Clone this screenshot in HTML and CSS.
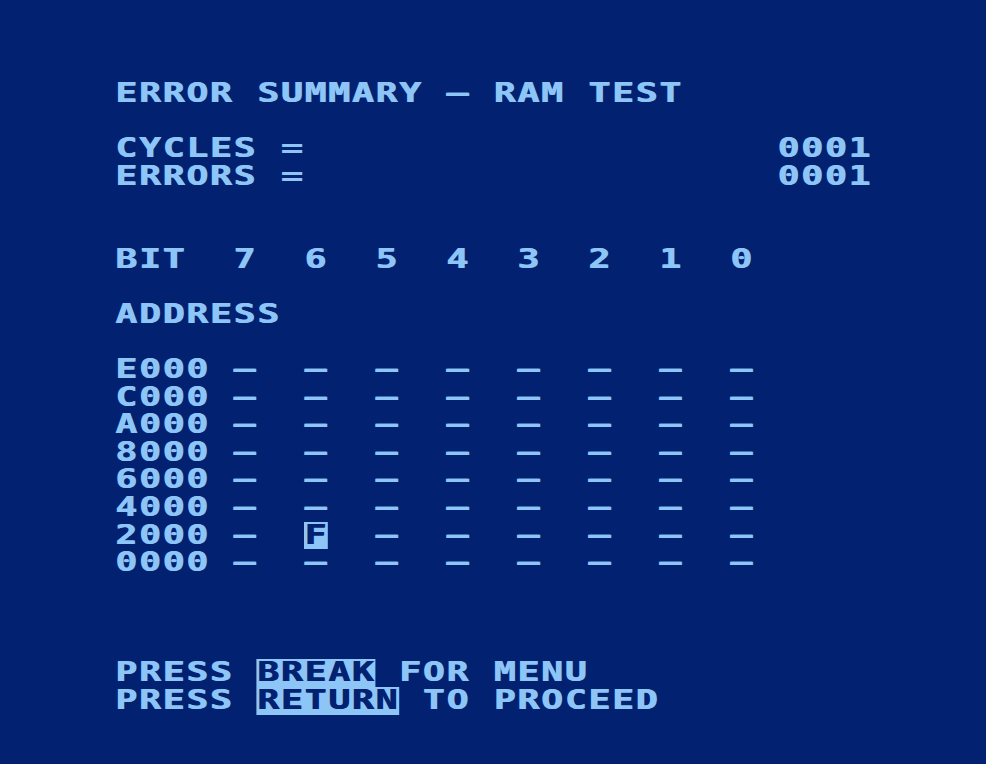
FILE: index.html
```html
<!DOCTYPE html>
<html lang="en">
  <head>
    <meta charset="UTF-8">
    <meta name="viewport" content="width=device-width, initial-scale=1.0">
    <title>Error Summary - RAM Test</title>
    <link rel="stylesheet" href="styles.css">
  </head>
  <body>
    <div class="screen">
      <div class="row">ERROR SUMMARY – RAM TEST</div>
      <div class="row"></div>
      <div class="row">CYCLES =                    0001</div>
      <div class="row">ERRORS =                    0001</div>
      <div class="row"></div>
      <div class="row"></div>
      <div class="row">BIT  7  6  5  4  3  2  1  0</div>
      <div class="row"></div>
      <div class="row">ADDRESS</div>
      <div class="row"></div>
      <!-- one row per 8K bank, one column per data bit -->
      <div class="row">E000 –  –  –  –  –  –  –  –</div>
      <div class="row">C000 –  –  –  –  –  –  –  –</div>
      <div class="row">A000 –  –  –  –  –  –  –  –</div>
      <div class="row">8000 –  –  –  –  –  –  –  –</div>
      <div class="row">6000 –  –  –  –  –  –  –  –</div>
      <div class="row">4000 –  –  –  –  –  –  –  –</div>
      <div class="row">2000 –  <span class="inv">F</span>  –  –  –  –  –  –</div>
      <div class="row">0000 –  –  –  –  –  –  –  –</div>
      <div class="row"></div>
      <div class="row"></div>
      <div class="row"></div>
      <div class="row">PRESS <span class="inv">BREAK</span> FOR MENU</div>
      <div class="row">PRESS <span class="inv">RETURN</span> TO PROCEED</div>
    </div>
  </body>
</html>
```

FILE: styles.css
```css
html, body {
    margin: 0;
    height: 100%;
    background: #022271;
    overflow: hidden;
}
.screen {
    padding: 80px 0 0 115px;
    color: #8ec5f7;
    font-family: "DejaVu Sans Mono", "Liberation Mono", monospace;
    font-weight: bold;
    font-size: 26px;
}
.row {
    width: 600px;
    height: 27.6px;
    line-height: 27.6px;
    white-space: pre;
    letter-spacing: 1.24px;
    text-shadow: 0.8px 0 0 currentColor;
    transform: scaleX(1.4);
    transform-origin: left center;
}
.inv {
    display: inline-block;
    height: 27.6px;
    background: #8ec5f7;
    color: #022271;
}
```
